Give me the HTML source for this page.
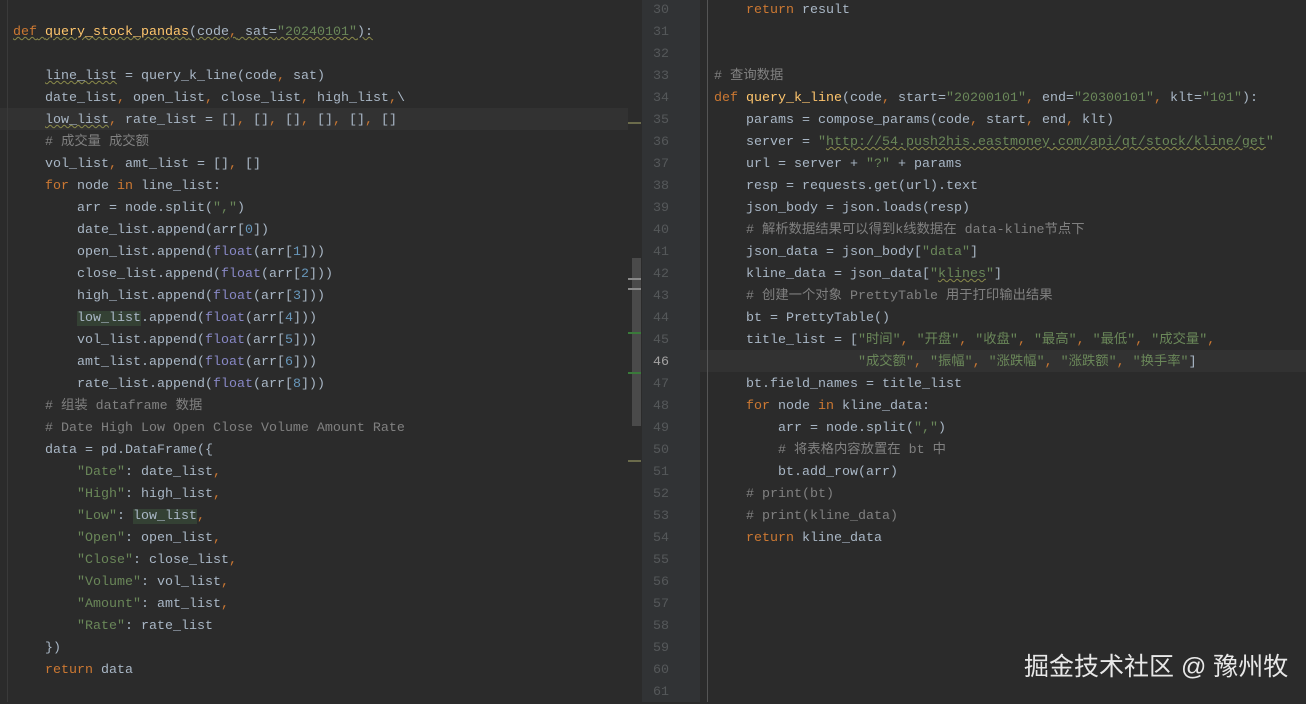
<!DOCTYPE html><html><head><meta charset="utf-8"><style>
body{margin:0;width:1306px;height:702px;background:#2b2b2b;overflow:hidden;position:relative;font-family:"Liberation Mono","Noto Sans CJK SC",monospace;font-size:13.33px;color:#a9b7c6}
.l{position:absolute;height:22px;line-height:22px;white-space:pre;margin-top:2px}
.k{color:#cc7832}.f{color:#ffc66d}.s{color:#6a8759}.c{color:#808080}.n{color:#6897bb}.b{color:#8888c6}
.ln{position:absolute;left:641px;width:28px;text-align:right;color:#55585a;height:22px;line-height:22px;margin-top:2px}
.hl{background:#344134}
.u{text-decoration:underline wavy #8a8a4a;text-decoration-thickness:1px}
</style></head><body>
<div style="position:absolute;left:0;top:108px;width:628px;height:22px;background:#323232"></div>
<div style="position:absolute;left:642px;top:0;width:58px;height:702px;background:#313335"></div>
<div style="position:absolute;left:700px;top:350px;width:606px;height:22px;background:#323232"></div>
<div style="position:absolute;left:707px;top:0;width:1px;height:702px;background:#555"></div>
<div style="position:absolute;left:7px;top:0;width:1px;height:702px;background:#3a3a3a"></div>
<div style="position:absolute;left:632px;top:258px;width:9px;height:168px;background:#4a4a4a"></div>
<div style="position:absolute;left:628px;top:122px;width:13px;height:2px;background:#6b6b4b"></div>
<div style="position:absolute;left:628px;top:460px;width:13px;height:2px;background:#6b6b4b"></div>
<div style="position:absolute;left:628px;top:332px;width:13px;height:2px;background:#3a7a3a"></div>
<div style="position:absolute;left:628px;top:372px;width:13px;height:2px;background:#3a7a3a"></div>
<div style="position:absolute;left:628px;top:288px;width:13px;height:2px;background:#888"></div>
<div style="position:absolute;left:628px;top:278px;width:13px;height:2px;background:#888"></div>

<div class="l" style="left:13px;top:20px"><span class="u"><span class="k">def</span> <span class="f">query_stock_pandas</span>(code<span class="k">,</span> sat=<span class="s">"20240101"</span>):</span></div>
<div class="l" style="left:13px;top:64px">    <span class="u">line_list</span> = query_k_line(code<span class="k">,</span> sat)</div>
<div class="l" style="left:13px;top:86px">    date_list<span class="k">,</span> open_list<span class="k">,</span> close_list<span class="k">,</span> high_list<span class="k">,</span>\</div>
<div class="l" style="left:13px;top:108px">    <span class="u">low_list</span><span class="k">,</span> rate_list = []<span class="k">,</span> []<span class="k">,</span> []<span class="k">,</span> []<span class="k">,</span> []<span class="k">,</span> []</div>
<div class="l c" style="left:13px;top:130px">    # 成交量 成交额</div>
<div class="l" style="left:13px;top:152px">    vol_list<span class="k">,</span> amt_list = []<span class="k">,</span> []</div>
<div class="l" style="left:13px;top:174px">    <span class="k">for</span> node <span class="k">in</span> line_list:</div>
<div class="l" style="left:13px;top:196px">        arr = node.split(<span class="s">","</span>)</div>
<div class="l" style="left:13px;top:218px">        date_list.append(arr[<span class="n">0</span>])</div>
<div class="l" style="left:13px;top:240px">        open_list.append(<span class="b">float</span>(arr[<span class="n">1</span>]))</div>
<div class="l" style="left:13px;top:262px">        close_list.append(<span class="b">float</span>(arr[<span class="n">2</span>]))</div>
<div class="l" style="left:13px;top:284px">        high_list.append(<span class="b">float</span>(arr[<span class="n">3</span>]))</div>
<div class="l" style="left:13px;top:306px">        <span class="hl">low_list</span>.append(<span class="b">float</span>(arr[<span class="n">4</span>]))</div>
<div class="l" style="left:13px;top:328px">        vol_list.append(<span class="b">float</span>(arr[<span class="n">5</span>]))</div>
<div class="l" style="left:13px;top:350px">        amt_list.append(<span class="b">float</span>(arr[<span class="n">6</span>]))</div>
<div class="l" style="left:13px;top:372px">        rate_list.append(<span class="b">float</span>(arr[<span class="n">8</span>]))</div>
<div class="l c" style="left:13px;top:394px">    # 组装 dataframe 数据</div>
<div class="l c" style="left:13px;top:416px">    # Date High Low Open Close Volume Amount Rate</div>
<div class="l" style="left:13px;top:438px">    data = pd.DataFrame({</div>
<div class="l" style="left:13px;top:460px">        <span class="s">"Date"</span>: date_list<span class="k">,</span></div>
<div class="l" style="left:13px;top:482px">        <span class="s">"High"</span>: high_list<span class="k">,</span></div>
<div class="l" style="left:13px;top:504px">        <span class="s">"Low"</span>: <span class="hl">low_list</span><span class="k">,</span></div>
<div class="l" style="left:13px;top:526px">        <span class="s">"Open"</span>: open_list<span class="k">,</span></div>
<div class="l" style="left:13px;top:548px">        <span class="s">"Close"</span>: close_list<span class="k">,</span></div>
<div class="l" style="left:13px;top:570px">        <span class="s">"Volume"</span>: vol_list<span class="k">,</span></div>
<div class="l" style="left:13px;top:592px">        <span class="s">"Amount"</span>: amt_list<span class="k">,</span></div>
<div class="l" style="left:13px;top:614px">        <span class="s">"Rate"</span>: rate_list</div>
<div class="l" style="left:13px;top:636px">    })</div>
<div class="l" style="left:13px;top:658px">    <span class="k">return</span> data</div>

<div class="ln" style="top:-2px">30</div><div class="ln" style="top:20px">31</div><div class="ln" style="top:42px">32</div><div class="ln" style="top:64px">33</div><div class="ln" style="top:86px">34</div><div class="ln" style="top:108px">35</div><div class="ln" style="top:130px">36</div><div class="ln" style="top:152px">37</div><div class="ln" style="top:174px">38</div><div class="ln" style="top:196px">39</div><div class="ln" style="top:218px">40</div><div class="ln" style="top:240px">41</div><div class="ln" style="top:262px">42</div><div class="ln" style="top:284px">43</div><div class="ln" style="top:306px">44</div><div class="ln" style="top:328px">45</div><div class="ln" style="top:350px;color:#a4a3a3">46</div><div class="ln" style="top:372px">47</div><div class="ln" style="top:394px">48</div><div class="ln" style="top:416px">49</div><div class="ln" style="top:438px">50</div><div class="ln" style="top:460px">51</div><div class="ln" style="top:482px">52</div><div class="ln" style="top:504px">53</div><div class="ln" style="top:526px">54</div><div class="ln" style="top:548px">55</div><div class="ln" style="top:570px">56</div><div class="ln" style="top:592px">57</div><div class="ln" style="top:614px">58</div><div class="ln" style="top:636px">59</div><div class="ln" style="top:658px">60</div><div class="ln" style="top:680px">61</div>

<div class="l" style="left:714px;top:-2px">    <span class="k">return</span> result</div>
<div class="l c" style="left:714px;top:64px"># 查询数据</div>
<div class="l" style="left:714px;top:86px"><span class="k">def</span> <span class="f">query_k_line</span>(code<span class="k">,</span> start=<span class="s">"20200101"</span><span class="k">,</span> end=<span class="s">"20300101"</span><span class="k">,</span> klt=<span class="s">"101"</span>):</div>
<div class="l" style="left:714px;top:108px">    params = compose_params(code<span class="k">,</span> start<span class="k">,</span> end<span class="k">,</span> klt)</div>
<div class="l" style="left:714px;top:130px">    server = <span class="s">"<span class="u">http://54.push2his.eastmoney.com/api/qt/stock/kline/get</span>"</span></div>
<div class="l" style="left:714px;top:152px">    url = server + <span class="s">"?"</span> + params</div>
<div class="l" style="left:714px;top:174px">    resp = requests.get(url).text</div>
<div class="l" style="left:714px;top:196px">    json_body = json.loads(resp)</div>
<div class="l c" style="left:714px;top:218px">    # 解析数据结果可以得到k线数据在 data-kline节点下</div>
<div class="l" style="left:714px;top:240px">    json_data = json_body[<span class="s">"data"</span>]</div>
<div class="l" style="left:714px;top:262px">    kline_data = json_data[<span class="s">"<span class="u">klines</span>"</span>]</div>
<div class="l c" style="left:714px;top:284px">    # 创建一个对象 PrettyTable 用于打印输出结果</div>
<div class="l" style="left:714px;top:306px">    bt = PrettyTable()</div>
<div class="l" style="left:714px;top:328px">    title_list = [<span class="s">"时间"</span><span class="k">,</span> <span class="s">"开盘"</span><span class="k">,</span> <span class="s">"收盘"</span><span class="k">,</span> <span class="s">"最高"</span><span class="k">,</span> <span class="s">"最低"</span><span class="k">,</span> <span class="s">"成交量"</span><span class="k">,</span></div>
<div class="l" style="left:714px;top:350px">                  <span class="s">"成交额"</span><span class="k">,</span> <span class="s">"振幅"</span><span class="k">,</span> <span class="s">"涨跌幅"</span><span class="k">,</span> <span class="s">"涨跌额"</span><span class="k">,</span> <span class="s">"换手率"</span>]</div>
<div class="l" style="left:714px;top:372px">    bt.field_names = title_list</div>
<div class="l" style="left:714px;top:394px">    <span class="k">for</span> node <span class="k">in</span> kline_data:</div>
<div class="l" style="left:714px;top:416px">        arr = node.split(<span class="s">","</span>)</div>
<div class="l c" style="left:714px;top:438px">        # 将表格内容放置在 bt 中</div>
<div class="l" style="left:714px;top:460px">        bt.add_row(arr)</div>
<div class="l c" style="left:714px;top:482px">    # print(bt)</div>
<div class="l c" style="left:714px;top:504px">    # print(kline_data)</div>
<div class="l" style="left:714px;top:526px">    <span class="k">return</span> kline_data</div>

<div style="position:absolute;left:1024px;top:650px;font-family:'Liberation Sans','Noto Sans CJK SC',sans-serif;font-size:25px;color:#e8e8e8;line-height:34px;white-space:nowrap">掘金技术社区 @ 豫州牧</div>
</body></html>
